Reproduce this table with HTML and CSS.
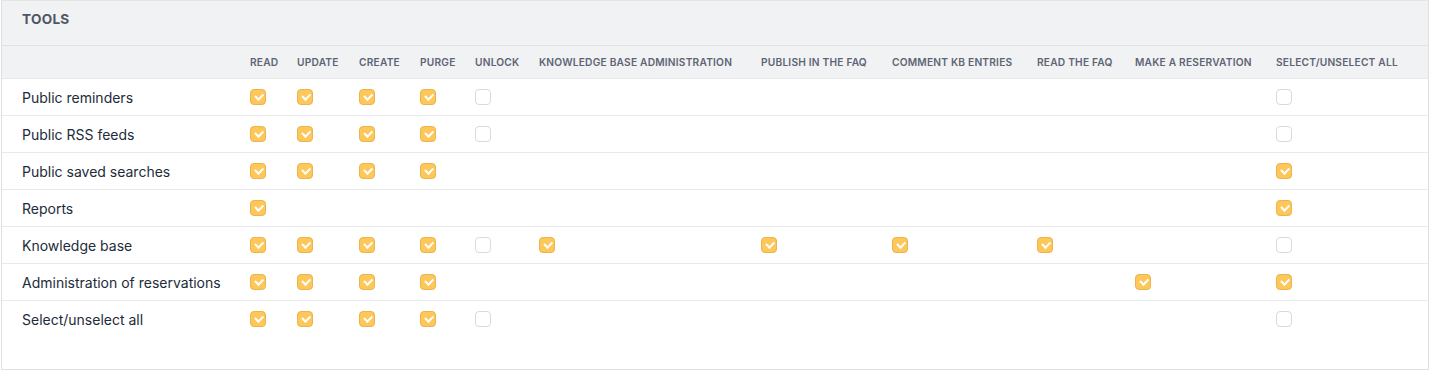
FILE: index.html
```html
<!DOCTYPE html>
<html>
<head>
<meta charset="utf-8">
<link rel="stylesheet" href="styles.css">
</head>
<body>
<div class="card">
  <div class="card-header">TOOLS</div>
  <table class="rights">
    <colgroup>
      <col class="c-label"><col class="c-read"><col class="c-update"><col class="c-create"><col class="c-purge"><col class="c-unlock"><col class="c-kbadmin"><col class="c-publish"><col class="c-comment"><col class="c-readfaq"><col class="c-reserve"><col class="c-all">
    </colgroup>
    <thead>
      <tr>
        <th></th><th>Read</th><th>Update</th><th>Create</th><th>Purge</th><th>Unlock</th><th>Knowledge base administration</th><th>Publish in the FAQ</th><th>Comment KB entries</th><th>Read the FAQ</th><th>Make a reservation</th><th>Select/unselect all</th>
      </tr>
    </thead>
    <tbody>
      <tr>
        <td class="label">Public reminders</td>
        <td><span class="cb on"></span></td><td><span class="cb on"></span></td><td><span class="cb on"></span></td><td><span class="cb on"></span></td><td><span class="cb"></span></td>
        <td></td><td></td><td></td><td></td><td></td><td><span class="cb"></span></td>
      </tr>
      <tr>
        <td class="label">Public RSS feeds</td>
        <td><span class="cb on"></span></td><td><span class="cb on"></span></td><td><span class="cb on"></span></td><td><span class="cb on"></span></td><td><span class="cb"></span></td>
        <td></td><td></td><td></td><td></td><td></td><td><span class="cb"></span></td>
      </tr>
      <tr>
        <td class="label">Public saved searches</td>
        <td><span class="cb on"></span></td><td><span class="cb on"></span></td><td><span class="cb on"></span></td><td><span class="cb on"></span></td><td></td>
        <td></td><td></td><td></td><td></td><td></td><td><span class="cb on"></span></td>
      </tr>
      <tr>
        <td class="label">Reports</td>
        <td><span class="cb on"></span></td><td></td><td></td><td></td><td></td>
        <td></td><td></td><td></td><td></td><td></td><td><span class="cb on"></span></td>
      </tr>
      <tr>
        <td class="label">Knowledge base</td>
        <td><span class="cb on"></span></td><td><span class="cb on"></span></td><td><span class="cb on"></span></td><td><span class="cb on"></span></td><td><span class="cb"></span></td>
        <td><span class="cb on"></span></td><td><span class="cb on"></span></td><td><span class="cb on"></span></td><td><span class="cb on"></span></td><td></td><td><span class="cb"></span></td>
      </tr>
      <tr>
        <td class="label">Administration of reservations</td>
        <td><span class="cb on"></span></td><td><span class="cb on"></span></td><td><span class="cb on"></span></td><td><span class="cb on"></span></td><td></td>
        <td></td><td></td><td></td><td></td><td><span class="cb on"></span></td><td><span class="cb on"></span></td>
      </tr>
      <tr class="last">
        <td class="label">Select/unselect all</td>
        <td><span class="cb on"></span></td><td><span class="cb on"></span></td><td><span class="cb on"></span></td><td><span class="cb on"></span></td><td><span class="cb"></span></td>
        <td></td><td></td><td></td><td></td><td></td><td><span class="cb"></span></td>
      </tr>
    </tbody>
  </table>
</div>
</body>
</html>
```
FILE: styles.css
```css
html, body {
  margin: 0;
  padding: 0;
  background: #ffffff;
}
body {
  font-family: Inter, "Noto Sans", sans-serif;
  color: #222b3a;
  padding: 0 2px 0 1px;
}
.card {
  border: 1px solid #dcdfe4;
  border-top: 1px solid #e3e5e9;
  height: 370px;
  box-sizing: border-box;
  background: #fff;
}
.card-header {
  background: #f1f2f4;
  height: 45px;
  box-sizing: border-box;
  padding: 10px 0 0 20px;
  font-size: 13.6px;
  font-weight: 700;
  letter-spacing: 0.02em;
  color: #4e5664;
  border-bottom: 1px solid #dfe2e6;
}
.rights {
  width: 100%;
  table-layout: fixed;
  border-collapse: collapse;
}
.c-label { width: 248px; }
.c-read { width: 47px; }
.c-update { width: 62px; }
.c-create { width: 61px; }
.c-purge { width: 55px; }
.c-unlock { width: 64px; }
.c-kbadmin { width: 222px; }
.c-publish { width: 131px; }
.c-comment { width: 145px; }
.c-readfaq { width: 98px; }
.c-reserve { width: 141px; }
.c-all { width: auto; }
.rights thead th {
  background: #f1f2f4;
  height: 32px;
  padding: 0;
  text-align: left;
  vertical-align: middle;
  font-size: 10.2px;
  font-weight: 600;
  letter-spacing: 0.02em;
  text-transform: uppercase;
  color: #5d6574;
  white-space: nowrap;
  border-bottom: 1px solid #e6e8eb;
}
.rights tbody td {
  height: 36px;
  padding: 0;
  vertical-align: middle;
  border-bottom: 1px solid #e8eaed;
}
.rights tbody tr.last td {
  border-bottom: none;
}
.rights td.label {
  padding-left: 20px;
  font-size: 14px;
  color: #222b3a;
}
.cb {
  display: block;
  width: 16px;
  height: 16px;
  box-sizing: border-box;
  border: 1px solid #d7dadf;
  border-radius: 4px;
  background: #fff;
  position: relative;
}
.cb.on {
  background: #fdc75a;
  border-color: #ebb44c;
}
.cb.on::after {
  content: "";
  position: absolute;
  left: 4px;
  top: 3px;
  width: 6px;
  height: 3.5px;
  border-left: 2px solid #fff;
  border-bottom: 2px solid #fff;
  transform: rotate(-45deg);
  transform-origin: center;
}
```
